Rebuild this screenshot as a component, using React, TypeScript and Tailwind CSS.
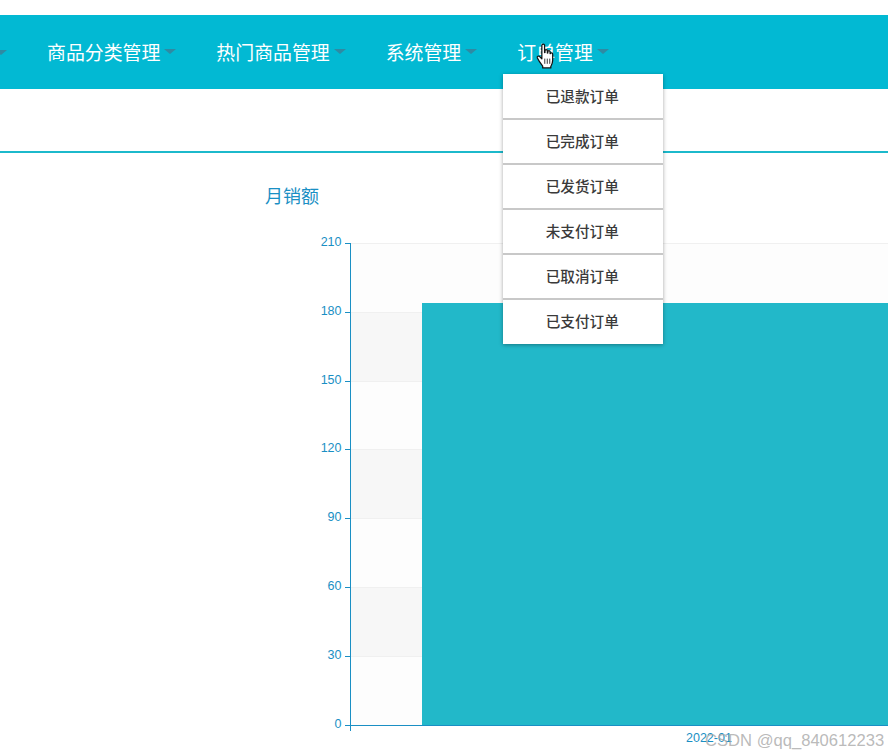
const font = { fontFamily: '"Noto Sans CJK SC", "Liberation Sans", sans-serif' };

const menu = ["已退款订单", "已完成订单", "已发货订单", "未支付订单", "已取消订单", "已支付订单"];
const navItems = ["商品分类管理", "热门商品管理", "系统管理"];
const ticks = [
  { label: "210", y: 243 },
  { label: "180", y: 312 },
  { label: "150", y: 381 },
  { label: "120", y: 449 },
  { label: "90", y: 518 },
  { label: "60", y: 587 },
  { label: "30", y: 656 },
  { label: "0", y: 725 },
];

function Caret() {
  return <span className="ml-1 h-0 w-0 shrink-0 border-x-[6px] border-t-[5px] border-x-transparent border-t-[#2f8aa3]" />;
}

function Hand() {
  return (
    <svg className="absolute left-[19px] top-[5px]" width="19" height="26" viewBox="0 0 18 25">
      <path
        d="M5.5 2.2c0-1.6 2.6-1.6 2.6 0v7l.4-.1V7.4c0-1.4 2.3-1.4 2.3 0v2.2l.4.1V8.400c0-1.300 2.200-1.300 2.200 0v1.800l.4.100c0-1.200 2.100-1.200 2.100.2v6c0 3-.8 4.200-1.800 6v1.500H6.300v-1.700C4.500 20 2.600 17.500 1.200 14.500c-.7-1.600 1.200-2.700 2.400-1.300l1.900 2z"
        fill="#fff"
        stroke="#111"
        strokeWidth="1.200"
        strokeLinejoin="round"
      />
      <path d="M8.300 15v5M10.700 15v5M13.100 15v5" stroke="#111" strokeWidth="0.800" />
    </svg>
  );
}

export default function App() {
  return (
    <div className="h-[756px] w-[888px] overflow-hidden bg-white" style={font}>
      <div className="h-[15px] bg-white" />
      <nav className="flex h-[74px] items-center gap-[40px] bg-[#02b9d3] text-[18.9px] text-white">
        <span className="-ml-[9px] flex">
          <Caret />
        </span>
        {navItems.map((item) => (
          <div key={item} className="flex items-center">
            <span>{item}</span>
            <Caret />
          </div>
        ))}
        <div className="relative flex items-center">
          <span>订单管理</span>
          <Caret />
          <Hand />
          <ul className="absolute left-[-14px] top-[36px] z-10 w-[160px] bg-white pt-px shadow-[0_1px_4px_rgba(0,0,0,0.35)]">
            {menu.map((item, idx) => (
              <li
                key={item}
                className={`flex items-center justify-center pb-px pr-[2px] text-[14.6px] font-medium text-[#3a3a3a] ${idx < 5 ? "h-[45px] border-b-2 border-[#c8c8c8]" : "h-[44px]"}`}
              >
                {item}
              </li>
            ))}
          </ul>
        </div>
      </nav>
      <div className="h-[62px] border-b-2 border-[#1cb9cb] box-content" />
      <div className="relative h-[603px]">
        <h2 className="pl-[265px] pt-[29px] text-[18px] leading-[26px] text-[#1a8fc4]">月销额</h2>
        <svg className="mt-[22px] block" width="888" height="526" viewBox="0 230 888 526">
          {ticks.slice(0, -1).map((t, i) => (
            <rect key={t.y} x="351" y={t.y} width="537" height={ticks[i + 1].y - t.y} fill={i % 2 ? "#f7f7f7" : "#fdfdfd"} />
          ))}
          {ticks.map((t) => (
            <g key={t.label}>
              <line x1="351" x2="888" y1={t.y + 0.5} y2={t.y + 0.5} stroke="#f0f0f0" />
              <line x1="345" x2="351" y1={t.y + 0.5} y2={t.y + 0.5} stroke="#1a8fc4" />
              <text x="341.500" y={t.y + 3} textAnchor="end" fontSize="12.500" fill="#1a8fc4" fontFamily="Liberation Sans, sans-serif">
                {t.label}
              </text>
            </g>
          ))}
          <rect x="422" y="303" width="466" height="422" fill="#22b8c9" />
          <line x1="350.500" x2="350.500" y1="243" y2="731" stroke="#1a8fc4" />
          <line x1="345" x2="888" y1="725.500" y2="725.500" stroke="#1a8fc4" />
          <text x="686" y="742" fontSize="12.500" fill="#1a8fc4" fontFamily="Liberation Sans, sans-serif">
            2022-01
          </text>
        </svg>
        <span className="absolute left-[705px] top-[577px] whitespace-nowrap text-[16.600px] leading-[22px] text-[#a8a8a8]/80" style={{ fontFamily: '"Liberation Sans", sans-serif' }}>
          CSDN @qq_840612233
        </span>
      </div>
    </div>
  );
}
